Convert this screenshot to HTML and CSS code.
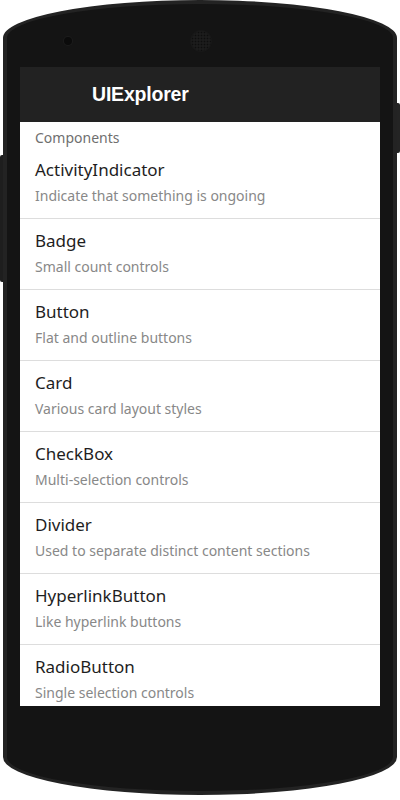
FILE: index.html
```html
<!DOCTYPE html>
<html>
<head>
<meta charset="utf-8">
<link rel="stylesheet" href="styles.css">
</head>
<body>
<div class="device">
  <div class="side-btn side-left"></div>
  <div class="phone">
    <div class="top-bezel">
      <span class="camera"></span>
      <span class="speaker"></span>
    </div>
    <div class="screen">
      <div class="appbar"><span class="app-title">UIExplorer</span></div>
      <div class="list">
        <div class="section">Components</div>
        <div class="item"><div class="item-title">ActivityIndicator</div><div class="item-sub">Indicate that something is ongoing</div></div>
        <div class="item"><div class="item-title">Badge</div><div class="item-sub">Small count controls</div></div>
        <div class="item"><div class="item-title">Button</div><div class="item-sub">Flat and outline buttons</div></div>
        <div class="item"><div class="item-title">Card</div><div class="item-sub">Various card layout styles</div></div>
        <div class="item"><div class="item-title">CheckBox</div><div class="item-sub">Multi-selection controls</div></div>
        <div class="item"><div class="item-title">Divider</div><div class="item-sub">Used to separate distinct content sections</div></div>
        <div class="item"><div class="item-title">HyperlinkButton</div><div class="item-sub">Like hyperlink buttons</div></div>
        <div class="item"><div class="item-title">RadioButton</div><div class="item-sub">Single selection controls</div></div>
      </div>
    </div>
  </div>
  <div class="side-btn side-right"></div>
</div>
</body>
</html>
```

FILE: styles.css
```css
html, body {
  margin: 0;
  padding: 0;
  background: #ffffff;
}
body {
  width: 400px;
  height: 800px;
  overflow: hidden;
  font-family: "Noto Sans", "Liberation Sans", sans-serif;
}
.device {
  display: flex;
  align-items: flex-start;
  width: 400px;
}
.side-btn {
  width: 3px;
  flex: none;
  background: #1e1e1e;
}
.side-left {
  margin-top: 155px;
  height: 127px;
  border-radius: 2px 0 0 2px;
}
.side-right {
  margin-top: 103px;
  height: 50px;
  background: #242424;
  border-radius: 0 2px 2px 0;
}
.phone {
  box-sizing: border-box;
  width: 394px;
  height: 795px;
  flex: none;
  background: #141414;
  border: 4px solid #232323;
  border-radius: 197px 197px 197px 197px / 38px 38px 38px 38px;
  padding: 0 13px;
  display: flex;
  flex-direction: column;
}
.top-bezel {
  height: 63px;
  flex: none;
  display: flex;
  align-items: center;
}
.camera {
  width: 8px;
  height: 8px;
  border-radius: 50%;
  background: #0b0b0b;
  box-shadow: 0 0 0 1px #1c1c1c;
  margin-left: 44px;
  margin-top: 11px;
}
.speaker {
  width: 20px;
  height: 20px;
  border-radius: 50%;
  margin-left: 119px;
  margin-top: 11px;
  background-color: #1c1c1c;
  background-image: radial-gradient(circle, #0e0e0e 0.8px, transparent 1.1px);
  background-size: 3px 3px;
  box-shadow: 0 0 0 1px #181818;
}
.screen {
  width: 360px;
  height: 639px;
  flex: none;
  overflow: hidden;
  background: #ffffff;
  display: flex;
  flex-direction: column;
}
.appbar {
  height: 55px;
  flex: none;
  background: #222222;
  display: flex;
  align-items: center;
  padding-left: 72px;
}
.app-title {
  font-family: "Liberation Sans", Arial, sans-serif;
  font-weight: bold;
  font-size: 19.5px;
  color: #ffffff;
  letter-spacing: -0.2px;
}
.list {
  display: flex;
  flex-direction: column;
}
.section {
  padding: 6px 15px 0;
  height: 20px;
  line-height: 20px;
  font-size: 14px;
  color: #6f6f6f;
}
.item {
  padding: 11px 15px 12px;
  border-bottom: 1px solid #dddddd;
  display: flex;
  flex-direction: column;
  gap: 5px;
  flex: none;
}
.item-title {
  font-size: 17px;
  line-height: 22px;
  color: #1e1e1e;
}
.item-sub {
  font-size: 14px;
  line-height: 20px;
  color: #888888;
}
```
